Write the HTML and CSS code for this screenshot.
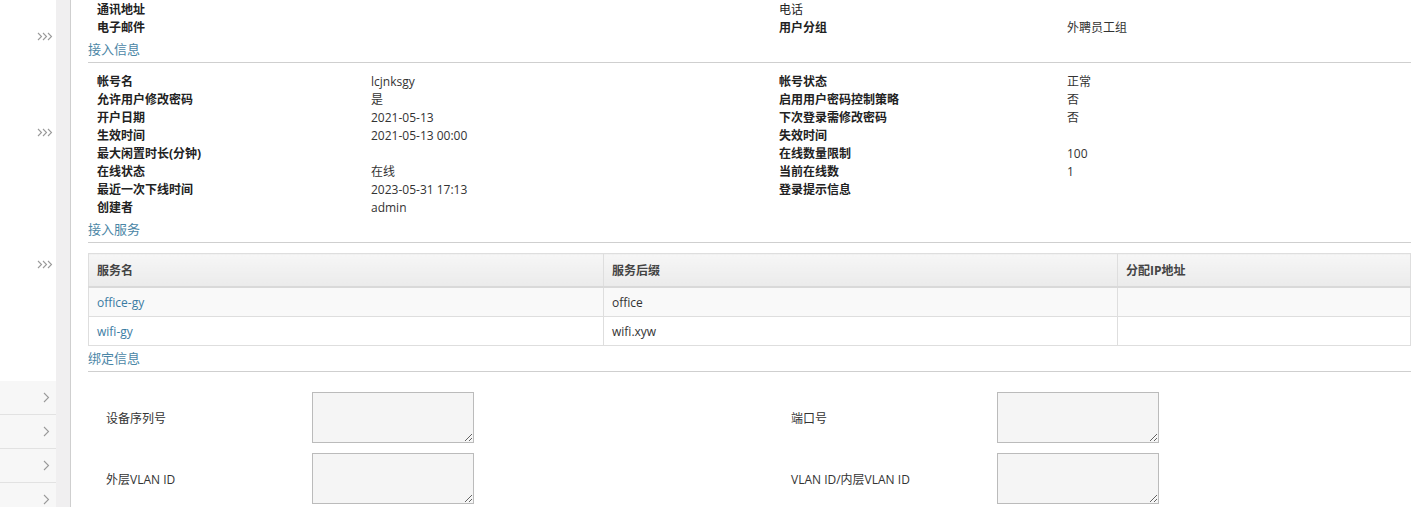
FILE: index.html
```html
<!DOCTYPE html>
<html lang="zh-CN">
<head>
    <meta charset="UTF-8">
    <title>用户详情</title>
    <link rel="stylesheet" href="styles.css">
</head>
<body>
    <div class="sidebar">
        <svg class="toggle t1" width="16" height="9" viewBox="0 0 16 9"><path d="M1 1l3.5 3.5L1 8M6 1l3.5 3.5L6 8M11 1l3.5 3.5L11 8"/></svg>
        <svg class="toggle t2" width="16" height="9" viewBox="0 0 16 9"><path d="M1 1l3.5 3.5L1 8M6 1l3.5 3.5L6 8M11 1l3.5 3.5L11 8"/></svg>
        <svg class="toggle t3" width="16" height="9" viewBox="0 0 16 9"><path d="M1 1l3.5 3.5L1 8M6 1l3.5 3.5L6 8M11 1l3.5 3.5L11 8"/></svg>
        <ul class="menu">
            <li><svg width="7" height="11" viewBox="0 0 7 11"><path d="M1 1l4.5 4.5L1 10"/></svg></li>
            <li><svg width="7" height="11" viewBox="0 0 7 11"><path d="M1 1l4.5 4.5L1 10"/></svg></li>
            <li><svg width="7" height="11" viewBox="0 0 7 11"><path d="M1 1l4.5 4.5L1 10"/></svg></li>
            <li><svg width="7" height="11" viewBox="0 0 7 11"><path d="M1 1l4.5 4.5L1 10"/></svg></li>
        </ul>
    </div>
    <div class="gutter"></div>

    <div class="main">
        <div class="info">
            <span class="label">通讯地址</span><span></span>
            <span class="label light">电话</span><span></span>
            <span class="label">电子邮件</span><span></span>
            <span class="label">用户分组</span><span>外聘员工组</span>
        </div>

        <h3 class="section">接入信息</h3>
        <div class="info pad">
            <span class="label">帐号名</span><span>lcjnksgy</span>
            <span class="label">帐号状态</span><span>正常</span>
            <span class="label">允许用户修改密码</span><span>是</span>
            <span class="label">启用用户密码控制策略</span><span>否</span>
            <span class="label">开户日期</span><span>2021-05-13</span>
            <span class="label">下次登录需修改密码</span><span>否</span>
            <span class="label">生效时间</span><span>2021-05-13 00:00</span>
            <span class="label">失效时间</span><span></span>
            <span class="label">最大闲置时长(分钟)</span><span></span>
            <span class="label">在线数量限制</span><span>100</span>
            <span class="label">在线状态</span><span>在线</span>
            <span class="label">当前在线数</span><span>1</span>
            <span class="label">最近一次下线时间</span><span>2023-05-31 17:13</span>
            <span class="label">登录提示信息</span><span></span>
            <span class="label">创建者</span><span>admin</span>
            <span></span><span></span>
        </div>

        <h3 class="section">接入服务</h3>
        <table class="services">
            <colgroup>
                <col class="c1"><col class="c2"><col>
            </colgroup>
            <thead>
                <tr><th>服务名</th><th>服务后缀</th><th>分配IP地址</th></tr>
            </thead>
            <tbody>
                <tr><td><a href="#">office-gy</a></td><td>office</td><td></td></tr>
                <tr><td><a href="#">wifi-gy</a></td><td>wifi.xyw</td><td></td></tr>
            </tbody>
        </table>

        <h3 class="section">绑定信息</h3>
        <div class="bind">
            <label>设备序列号</label><textarea></textarea>
            <span></span>
            <label>端口号</label><textarea></textarea>
            <label>外层VLAN ID</label><textarea></textarea>
            <span></span>
            <label>VLAN ID/内层VLAN ID</label><textarea></textarea>
        </div>
    </div>
</body>
</html>
```

FILE: styles.css
```css
html, body {
    margin: 0;
    height: 100%;
    overflow: hidden;
}
body {
    display: flex;
    font-family: "Open Sans", "Noto Sans CJK SC", sans-serif;
    font-size: 12px;
    color: #333;
    background: #fff;
}
.sidebar {
    width: 56px;
    flex-shrink: 0;
    display: flex;
    flex-direction: column;
    overflow: hidden;
}
.sidebar > * {
    flex-shrink: 0;
}
.sidebar path {
    fill: none;
    stroke: #9a9a9a;
    stroke-width: 1.1;
}
.toggle {
    display: block;
    align-self: flex-end;
    margin-right: 3px;
}
.t1 { margin-top: 32px; }
.t2 { margin-top: 87px; }
.t3 { margin-top: 123px; }
.menu {
    list-style: none;
    margin: 112px 0 0;
    padding: 0;
}
.menu li {
    height: 33px;
    background: #f7f7f7;
    border-bottom: 1px solid #e2e2e2;
    display: flex;
    align-items: center;
    justify-content: flex-end;
    padding-right: 6px;
}
.gutter {
    width: 14px;
    flex-shrink: 0;
    background: #f0eff0;
    border-right: 1px solid #cfcfcf;
}
.main {
    flex: 1;
    padding-top: 1px;
    padding-left: 17px;
    min-width: 0;
}
.info {
    display: grid;
    grid-template-columns: 274px 408px 288px 1fr;
    padding-left: 9px;
    line-height: 18px;
}
.info.pad {
    margin-top: 10px;
}
.label {
    font-weight: bold;
    color: #222;
}
.label.light {
    font-weight: normal;
}
.section {
    margin: 0;
    font-size: 13px;
    font-weight: normal;
    color: #4b86a6;
    line-height: 20px;
    padding: 2px 0 3px;
    border-bottom: 1px solid #cfcfcf;
}
.services {
    margin: 10px 0 0;
    width: 100%;
    border-collapse: collapse;
    table-layout: fixed;
}
.services .c1 { width: 515px; }
.services .c2 { width: 514px; }
.services th,
.services td {
    text-align: left;
    padding: 0 8px;
    border: 1px solid #dedede;
}
.services th {
    height: 32px;
    font-weight: bold;
    color: #444;
    background: linear-gradient(#f6f6f6, #ebebeb);
    border-bottom: 2px solid #d9d9d9;
}
.services td {
    height: 28px;
    background: #fff;
}
.services tbody tr:first-child td {
    background: #f9f9f9;
}
.services a {
    color: #3b7ca3;
    text-decoration: none;
}
.bind {
    display: grid;
    grid-template-columns: 206px 162px 317px 206px 162px;
    align-items: center;
    row-gap: 10px;
    padding: 20px 0 0 18px;
}
.bind label {
    color: #333;
}
.bind textarea {
    box-sizing: border-box;
    width: 162px;
    height: 51px;
    margin: 0;
    border: 1px solid #bbb;
    background: #f5f5f5;
    display: block;
}
```
